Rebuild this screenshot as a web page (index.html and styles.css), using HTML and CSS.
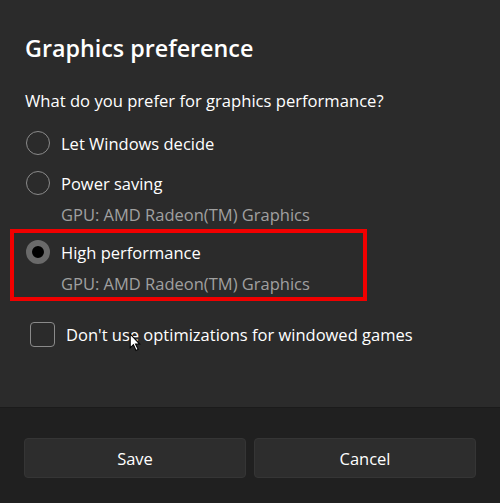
FILE: index.html
```html
<html>
<head>
<meta charset="UTF-8">
<meta name="viewport" content="width=device-width, initial-scale=1.0">
<link rel="stylesheet" href="styles.css">
</head>
<body>
<div class="dialog">
    <div class="content">
        <div class="title">Graphics preference</div>
        <div class="question">What do you prefer for graphics performance?</div>

        <div class="options">
            <div class="option">
                <div class="row"><span class="radio"></span><span class="label">Let Windows decide</span></div>
            </div>
            <div class="option">
                <div class="row"><span class="radio"></span><span class="label">Power saving</span></div>
                <div class="sub">GPU: AMD Radeon(TM) Graphics</div>
            </div>
            <!-- 선택된 항목 (빨간 박스 강조) -->
            <div class="option marked">
                <div class="row"><span class="radio checked"></span><span class="label">High performance</span></div>
                <div class="sub">GPU: AMD Radeon(TM) Graphics</div>
            </div>
        </div>

        <div class="check-row">
            <span class="checkbox"></span><span class="label">Don't use optimizations for windowed games</span>
            <svg class="cursor" width="13" height="19" viewBox="0 0 12 18"><path d="M1 1 L1 14 L4 11 L6.5 16.5 L8.5 15.5 L6 10.5 L10 10.5 Z" fill="#fff" stroke="#000" stroke-width="1"/></svg>
        </div>
    </div>
    <div class="footer">
        <button class="btn">Save</button>
        <button class="btn">Cancel</button>
    </div>
</div>
</body>
</html>
```

FILE: styles.css
```css
* { margin: 0; padding: 0; box-sizing: border-box; }
body { background: #2b2b2b; color: #fff; font-family: "Open Sans", "Noto Sans", sans-serif; }

.dialog { height: 503px; display: flex; flex-direction: column; }
.content { flex: 1; padding: 33px 25px 0 25px; }

.title { font-size: 23.3px; font-weight: 600; line-height: 30px; }
.question { font-size: 16.6px; line-height: 24px; margin-top: 26px; }

.options { margin-top: 10px; }
.option { position: relative; }
.option.marked { margin-top: 5px; }
.option.marked::before { content: ""; position: absolute; top: -3px; bottom: -5px; left: -15px; right: 108px; border: 4px solid #f10000; }

.row { display: flex; align-items: center; height: 40px; }
.label { font-size: 16.5px; }
.sub { font-size: 16.5px; line-height: 24px; color: #a0a0a0; padding-left: 36px; }

.radio { width: 24px; height: 24px; border-radius: 50%; border: 1.5px solid #8a8a8a; margin-left: 1px; margin-right: 11px; flex: none; }
.radio.checked { border: 6px solid #6a6a6a; background: #000; }

.check-row { position: relative; display: flex; align-items: center; height: 40px; margin-top: 18px; padding-left: 5px; }
.checkbox { width: 25px; height: 25px; border: 1.5px solid #8a8a8a; border-radius: 4px; margin-right: 11px; flex: none; }
.cursor { position: absolute; left: 104px; top: 19px; }

.footer { background: #202020; border-top: 1px solid #1b1b1b; display: grid; grid-template-columns: 1fr 1fr; gap: 8px; padding: 30px 24px 25px 24px; }
.btn { height: 40px; background: #2d2d2d; border: 1px solid #353535; border-radius: 4px; color: #fff; font-family: "Open Sans", "Noto Sans", sans-serif; font-size: 16.5px; }
```
